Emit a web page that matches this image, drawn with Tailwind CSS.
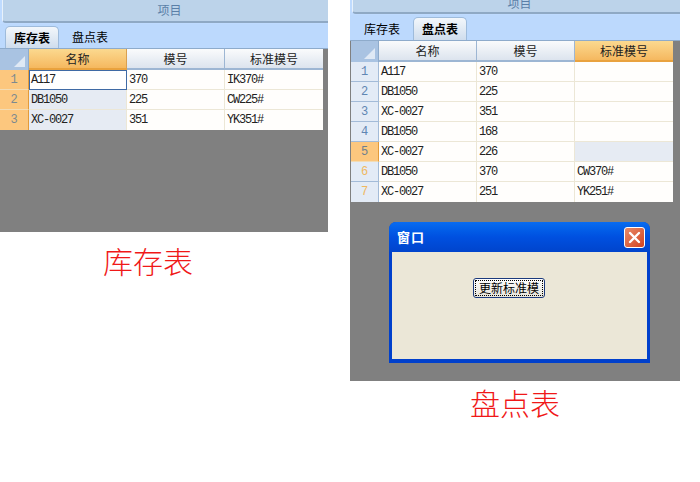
<!DOCTYPE html>
<html lang="zh">
<head>
<meta charset="utf-8">
<script src="https://cdn.jsdelivr.net/npm/@tailwindcss/browser@4"></script>
<title>库存表 盘点表</title>
</head>
<body class="bg-white overflow-hidden">
<div class="w-[700px] h-[482px] flex items-start font-['Liberation_Mono','Noto_Sans_CJK_SC',monospace] text-[12px] text-[#222]">

  <!-- Left -->
  <section class="w-[328px] shrink-0 flex flex-col">
    <div class="h-[232px] flex flex-col bg-[#808080]">
      <div class="h-[24px] shrink-0 bg-[#bfdbff] pl-[2px]">
        <div class="h-[23px] rounded-bl-[4px] border-l border-b-2 border-l-[#e8f1fb] border-b-[#8fa9c4] bg-[#bcd3ea] flex items-center justify-center pl-[8px] pb-[2px] text-[#5a7fa8] font-['Noto_Sans_CJK_SC']">项目</div>
      </div>
      <div class="h-[25px] shrink-0 bg-[#bcd9fd] pl-[5px] flex items-end border-b border-b-[#8eabcb] font-['Noto_Sans_CJK_SC']">
        <div class="w-[54px] h-[22px] rounded-t-[5px] border border-b-0 border-[#9ebbdb] bg-gradient-to-b from-[#f3f7fb] to-[#cfdded] flex items-center justify-center font-bold text-black">库存表</div>
        <div class="w-[62px] h-[22px] flex items-center justify-center text-black">盘点表</div>
      </div>
      <div class="w-[323px] grid grid-cols-[29px_98px_98px_98px] grid-rows-[21px_20px_20px_20px] bg-[#fffefc]">
        <div class="relative bg-[#a9c3e2] border-r border-[#8eabcb]"><div class="absolute right-[3px] bottom-[3px] w-0 h-0 border-t-[11px] border-t-transparent border-l-[11px] border-l-transparent border-r-[11px] border-r-[#dfe9f5]"></div></div>
        <div class="flex items-center justify-center bg-gradient-to-b from-[#fbd98f] to-[#f5b85f] border-b-2 border-r border-b-[#e9a23e] border-r-[#d9a050] font-['Noto_Sans_CJK_SC']">名称</div>
        <div class="flex items-center justify-center bg-gradient-to-b from-[#fafbfc] to-[#dce4ee] border-b-2 border-r border-[#9db6d3] font-['Noto_Sans_CJK_SC']">模号</div>
        <div class="flex items-center justify-center bg-gradient-to-b from-[#fafbfc] to-[#dce4ee] border-b-2 border-[#9db6d3] font-['Noto_Sans_CJK_SC']">标准模号</div>

        <div class="flex items-center justify-center bg-[#fcc77e] border-b border-r border-b-[#f2dcb5] border-r-[#e39b3a] text-[#7d8a8f]">1</div>
        <div class="flex items-center pl-[1px] bg-white border-[1.5px] border-[#3f6aa5] tracking-[-1.2px]">A117</div>
        <div class="flex items-center pl-[2px] border-b border-r border-[#ece7d6] tracking-[-1.2px]">370</div>
        <div class="flex items-center pl-[2px] border-b border-[#ece7d6] tracking-[-1.2px]">IK370#</div>

        <div class="flex items-center justify-center bg-[#fcc77e] border-b border-r border-b-[#f2dcb5] border-r-[#e39b3a] text-[#7d8a8f]">2</div>
        <div class="flex items-center pl-[2px] bg-[#e6ebf3] border-b border-r border-[#ece7d6] tracking-[-1.2px]">DB1050</div>
        <div class="flex items-center pl-[2px] border-b border-r border-[#ece7d6] tracking-[-1.2px]">225</div>
        <div class="flex items-center pl-[2px] border-b border-[#ece7d6] tracking-[-1.2px]">CW225#</div>

        <div class="flex items-center justify-center bg-[#fcc77e] border-r border-r-[#e39b3a] text-[#7d8a8f]">3</div>
        <div class="flex items-center pl-[2px] bg-[#e6ebf3] border-r border-[#ece7d6] tracking-[-1.2px]">XC-0027</div>
        <div class="flex items-center pl-[2px] border-r border-[#ece7d6] tracking-[-1.2px]">351</div>
        <div class="flex items-center pl-[2px] tracking-[-1.2px]">YK351#</div>
      </div>
    </div>
    <h2 class="mt-[9px] text-center pr-[32px] text-[30px] leading-[38px] text-[#f01818] font-light font-['Noto_Sans_CJK_SC']">库存表</h2>
  </section>

  <!-- Right -->
  <section class="ml-[22px] w-[330px] shrink-0 flex flex-col">
    <div class="h-[381px] flex flex-col bg-[#808080]">
      <div class="h-[15px] shrink-0 bg-[#bfdbff] pl-[2px]">
        <div class="h-[14px] rounded-bl-[4px] border-l border-b-2 border-l-[#e8f1fb] border-b-[#8fa9c4] bg-[#bcd3ea] flex items-end justify-center pl-[6px] pb-[5px] leading-[9px] overflow-hidden text-[#5a7fa8] font-['Noto_Sans_CJK_SC']">项目</div>
      </div>
      <div class="h-[26px] shrink-0 bg-[#bcd9fd] pl-[1px] flex items-end border-b border-b-[#8eabcb] font-['Noto_Sans_CJK_SC']">
        <div class="w-[62px] h-[22px] flex items-center justify-center text-black">库存表</div>
        <div class="w-[54px] h-[23px] rounded-t-[5px] border border-b-0 border-[#9ebbdb] bg-gradient-to-b from-[#f3f7fb] to-[#cfdded] flex items-center justify-center font-bold text-black">盘点表</div>
      </div>
      <div class="ml-[1px] w-[322px] grid grid-cols-[28px_98px_98px_98px] grid-rows-[21px_repeat(7,20px)] bg-[#fffefc]">
        <div class="relative bg-[#a9c3e2] border-r border-[#8eabcb]"><div class="absolute right-[3px] bottom-[3px] w-0 h-0 border-t-[11px] border-t-transparent border-l-[11px] border-l-transparent border-r-[11px] border-r-[#dfe9f5]"></div></div>
        <div class="flex items-center justify-center bg-gradient-to-b from-[#fafbfc] to-[#dce4ee] border-b-2 border-r border-[#9db6d3] font-['Noto_Sans_CJK_SC']">名称</div>
        <div class="flex items-center justify-center bg-gradient-to-b from-[#fafbfc] to-[#dce4ee] border-b-2 border-r border-[#9db6d3] font-['Noto_Sans_CJK_SC']">模号</div>
        <div class="flex items-center justify-center bg-gradient-to-b from-[#fbd98f] to-[#f5b85f] border-b-2 border-b-[#e9a23e] font-['Noto_Sans_CJK_SC']">标准模号</div>

        <div class="flex items-center justify-center bg-[#e3ebf6] border-b border-r border-[#a3bbd8] text-[#5f86b3]">1</div>
        <div class="flex items-center pl-[2px] border-b border-r border-[#ece7d6] tracking-[-1.2px]">A117</div>
        <div class="flex items-center pl-[2px] border-b border-r border-[#ece7d6] tracking-[-1.2px]">370</div>
        <div class="border-b border-[#ece7d6]"></div>

        <div class="flex items-center justify-center bg-[#e3ebf6] border-b border-r border-[#a3bbd8] text-[#5f86b3]">2</div>
        <div class="flex items-center pl-[2px] border-b border-r border-[#ece7d6] tracking-[-1.2px]">DB1050</div>
        <div class="flex items-center pl-[2px] border-b border-r border-[#ece7d6] tracking-[-1.2px]">225</div>
        <div class="border-b border-[#ece7d6]"></div>

        <div class="flex items-center justify-center bg-[#e3ebf6] border-b border-r border-[#a3bbd8] text-[#5f86b3]">3</div>
        <div class="flex items-center pl-[2px] border-b border-r border-[#ece7d6] tracking-[-1.2px]">XC-0027</div>
        <div class="flex items-center pl-[2px] border-b border-r border-[#ece7d6] tracking-[-1.2px]">351</div>
        <div class="border-b border-[#ece7d6]"></div>

        <div class="flex items-center justify-center bg-[#e3ebf6] border-b border-r border-[#a3bbd8] text-[#5f86b3]">4</div>
        <div class="flex items-center pl-[2px] border-b border-r border-[#ece7d6] tracking-[-1.2px]">DB1050</div>
        <div class="flex items-center pl-[2px] border-b border-r border-[#ece7d6] tracking-[-1.2px]">168</div>
        <div class="border-b border-[#ece7d6]"></div>

        <div class="flex items-center justify-center bg-[#fcc77e] border-b border-r border-b-[#f2dcb5] border-r-[#e39b3a] text-[#6d7f8f]">5</div>
        <div class="flex items-center pl-[2px] border-b border-r border-[#ece7d6] tracking-[-1.2px]">XC-0027</div>
        <div class="flex items-center pl-[2px] border-b border-r border-[#ece7d6] tracking-[-1.2px]">226</div>
        <div class="bg-[#e6ebf3] border-b border-[#ece7d6]"></div>

        <div class="flex items-center justify-center bg-[#e3ebf6] border-b border-r border-[#a3bbd8] text-[#f0b860]">6</div>
        <div class="flex items-center pl-[2px] border-b border-r border-[#ece7d6] tracking-[-1.2px]">DB1050</div>
        <div class="flex items-center pl-[2px] border-b border-r border-[#ece7d6] tracking-[-1.2px]">370</div>
        <div class="flex items-center pl-[2px] border-b border-[#ece7d6] tracking-[-1.2px]">CW370#</div>

        <div class="flex items-center justify-center bg-[#e3ebf6] border-r border-[#a3bbd8] text-[#f0b860]">7</div>
        <div class="flex items-center pl-[2px] border-r border-[#ece7d6] tracking-[-1.2px]">XC-0027</div>
        <div class="flex items-center pl-[2px] border-r border-[#ece7d6] tracking-[-1.2px]">251</div>
        <div class="flex items-center pl-[2px] tracking-[-1.2px]">YK251#</div>
      </div>

      <!-- Dialog -->
      <div class="ml-[39px] mt-[20px] w-[261px] h-[141px] flex flex-col rounded-t-[7px] bg-[#0040cc] px-[3px] pb-[4px] font-['Noto_Sans_CJK_SC']">
        <div class="-mx-[3px] h-[30px] shrink-0 rounded-t-[7px] bg-gradient-to-b from-[#0a6cf0] via-[#0050e0] to-[#0044cc] flex items-center justify-between pl-[8px] pr-[5px]">
          <span class="text-white font-bold text-[13px] tracking-[1px]">窗口</span>
          <span class="w-[21px] h-[21px] rounded-[3px] border border-white bg-gradient-to-br from-[#e88a68] to-[#d2401c] flex items-center justify-center">
            <svg width="13" height="13" viewBox="0 0 13 13"><path d="M2 2 L11 11 M11 2 L2 11" stroke="#fff" stroke-width="2.4" stroke-linecap="round"/></svg>
          </span>
        </div>
        <div class="flex-1 bg-[#ebe7d7] pt-[26px] pl-[81px]">
          <button class="w-[72px] h-[20px] rounded-[3px] border border-[#1b3a7c] bg-gradient-to-b from-white to-[#e6e4da] outline-1 outline-dotted -outline-offset-3 outline-black text-black text-[12px] leading-none overflow-hidden whitespace-nowrap">更新标准模</button>
        </div>
      </div>
    </div>
    <h2 class="mt-[2px] text-center text-[30px] leading-[38px] text-[#f01818] font-light font-['Noto_Sans_CJK_SC'] w-[330px]">盘点表</h2>
  </section>
</div>
</body>
</html>
